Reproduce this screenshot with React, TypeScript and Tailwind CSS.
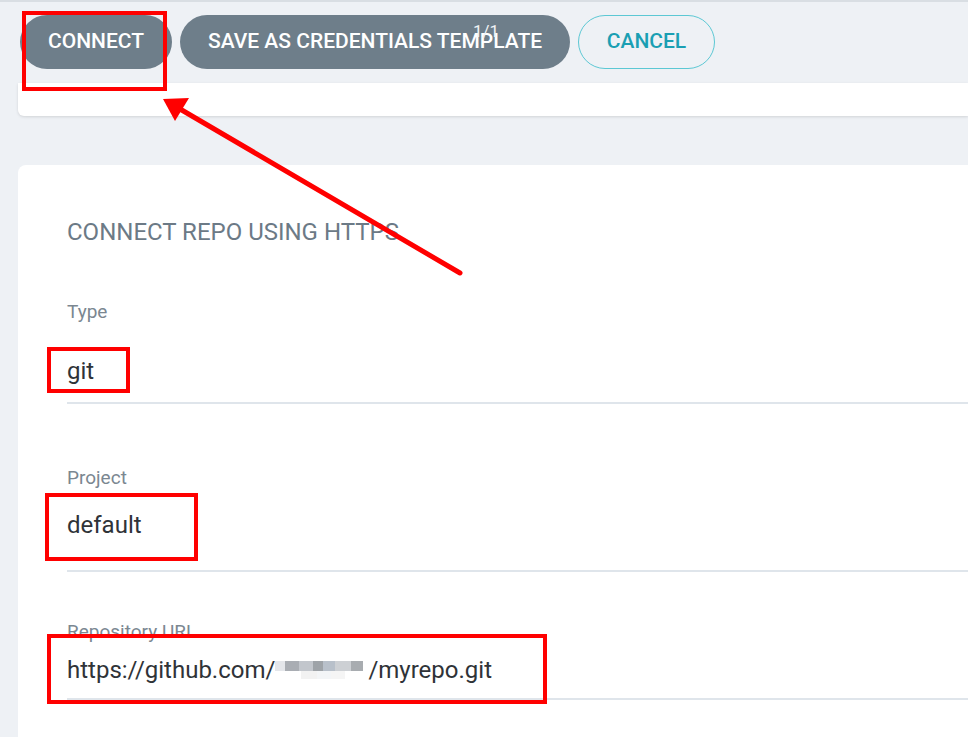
import React from "react";

function Field({ label, children, valueTop }: { label: string; children: React.ReactNode; valueTop: string }) {
  return (
    <div className="flex flex-col">
      <div className="text-[19px] text-[#7b8791] leading-[20px]">{label}</div>
      <div className={`text-[24px] text-[#2f3338] leading-[26px] ${valueTop}`}>{children}</div>
    </div>
  );
}

export default function App() {
  return (
    <div
      className="relative w-[968px] h-[737px] overflow-hidden bg-[#eef1f5]"
      style={{ fontFamily: "Roboto, 'Liberation Sans', sans-serif" }}
    >
      <div className="h-[2px] bg-[#d9dee3]" />
      {/* header buttons */}
      <div className="flex items-start gap-2 pl-[20px] pt-[13px] h-[81px]">
        <button className="h-[54px] w-[152px] rounded-full bg-[#6e7e8a] text-white text-[21px] font-medium">
          CONNECT
        </button>
        <button className="h-[54px] w-[390px] rounded-full bg-[#6e7e8a] text-white text-[21px] font-medium">
          SAVE AS CREDENTIALS TEMPLATE
        </button>
        <button className="h-[54px] w-[137px] rounded-full border-[1.5px] border-[#5cc8d4] text-[#1a9fb3] text-[21px] font-medium">
          CANCEL
        </button>
      </div>
      {/* white strip */}
      <div className="ml-[18px] h-[33px] bg-white rounded-bl-md shadow-[0_1px_3px_rgba(0,0,0,0.12)]" />
      {/* card */}
      <div className="ml-[18px] mt-[49px] bg-white rounded-tl-lg h-[600px] pl-[49px]">
        <div className="pt-[55px] text-[24px] leading-[24px] text-[#6c7a86]">CONNECT REPO USING HTTPS</div>
        <div className="mt-[58px]">
          <Field label="Type" valueTop="mt-[36px]">git</Field>
          <div className="mt-[18px] h-[2px] bg-[#dfe5eb]" />
        </div>
        <div className="mt-[64px]">
          <Field label="Project" valueTop="mt-[24px]">default</Field>
          <div className="mt-[32px] h-[2px] bg-[#dfe5eb]" />
        </div>
        <div className="mt-[50px]">
          <Field label="Repository URL" valueTop="mt-[15px]">
            <span className="inline-flex items-center">
              https://github.com/
              <span className="inline-flex flex-col w-[93px] h-[26px] justify-center">
                <span className="flex h-[10px]">
                  <span className="w-[10px] bg-[#e4e6ea]" />
                  <span className="w-[14px] bg-[#a9adb3]" />
                  <span className="w-[14px] bg-[#c2c6cc]" />
                  <span className="w-[10px] bg-[#9ea3a8]" />
                  <span className="w-[12px] bg-[#b8c0ca]" />
                  <span className="w-[16px] bg-[#cdd0d4]" />
                  <span className="w-[12px] bg-[#a8acb0]" />
                </span>
                <span className="flex h-[8px] ml-[26px]">
                  <span className="w-[16px] bg-[#f2f2f2]" />
                  <span className="w-[14px] bg-[#f3f5f7]" />
                  <span className="w-[14px] bg-[#f5f5f5]" />
                </span>
              </span>
              /myrepo.git
            </span>
          </Field>
          <div className="mt-[15px] h-[2px] bg-[#dfe5eb]" />
        </div>
      </div>

      {/* 1/1 text overlay */}
      <div className="absolute left-[473px] top-[21px] text-[17px] leading-[20px] text-[#eef2f5]">1/1</div>

      {/* annotation boxes */}
      <div className="absolute left-[22px] top-[11px] w-[145px] h-[80px] border-[4px] border-[#ff0000]" />
      <div className="absolute left-[47px] top-[347px] w-[83px] h-[46px] border-[4px] border-[#ff0000]" />
      <div className="absolute left-[45px] top-[493px] w-[153px] h-[68px] border-[4px] border-[#ff0000]" />
      <div className="absolute left-[47px] top-[634px] w-[500px] h-[70px] border-[4px] border-[#ff0000]" />
      <svg className="absolute left-0 top-0" width="968" height="737" viewBox="0 0 968 737">
        <line x1="460" y1="273" x2="180" y2="109" stroke="#ff0000" strokeWidth="5" strokeLinecap="round" />
        <polygon points="163,99 189,98 175,121" fill="#ff0000" />
      </svg>
    </div>
  );
}
